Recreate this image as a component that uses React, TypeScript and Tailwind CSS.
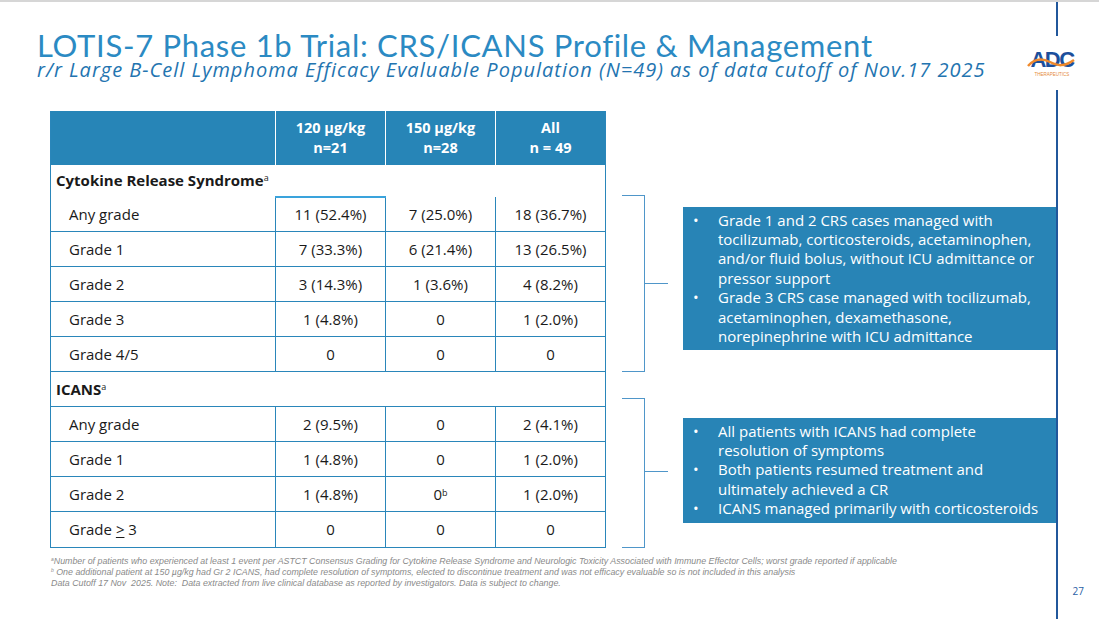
import React from "react";

const crsRows = [
  ["Any grade", "11 (52.4%)", "7 (25.0%)", "18 (36.7%)"],
  ["Grade 1", "7 (33.3%)", "6 (21.4%)", "13 (26.5%)"],
  ["Grade 2", "3 (14.3%)", "1 (3.6%)", "4 (8.2%)"],
  ["Grade 3", "1 (4.8%)", "0", "1 (2.0%)"],
  ["Grade 4/5", "0", "0", "0"],
];

const icansRows = [
  ["Any grade", "2 (9.5%)", "0", "2 (4.1%)"],
  ["Grade 1", "1 (4.8%)", "0", "1 (2.0%)"],
  ["Grade 2", "1 (4.8%)", "0b", "1 (2.0%)"],
  ["Grade >3", "0", "0", "0"],
];

function Cell({ value }: { value: string }) {
  if (value === "0b") {
    return (
      <>
        0<sup className="text-[9px]">b</sup>
      </>
    );
  }
  return <>{value}</>;
}

function Label({ value }: { value: string }) {
  if (value === "Grade >3") {
    return (
      <>
        Grade <span className="underline underline-offset-2">&gt;</span> 3
      </>
    );
  }
  return <>{value}</>;
}

function DataRow({ row, first }: { row: string[]; first?: boolean }) {
  return (
    <tr className="h-[35px] border-b border-[#2a86ba]">
      <td className="pl-[18px] text-left">
        <Label value={row[0]} />
      </td>
      {row.slice(1).map((v, i) => (
        <td
          key={i}
          className={
            "border-l border-[#2a86ba] text-center " +
            (first && i === 0 ? "border-t-2 border-t-[#3aa3dc]" : "")
          }
        >
          <Cell value={v} />
        </td>
      ))}
    </tr>
  );
}

function Bracket({ height, tick }: { height: number; tick: number }) {
  return (
    <div className="flex items-start">
      <div
        className="w-[23px] border-y-[1.5px] border-r-[1.5px] border-[#4f96c9]"
        style={{ height }}
      />
      <div className="w-[23px] h-[1.5px] bg-[#4f96c9]" style={{ marginTop: tick }} />
    </div>
  );
}

function Bullets({ items }: { items: string[] }) {
  return (
    <ul className="bg-[#2884b6] text-white text-[15px] leading-[19.4px] font-medium pl-[10px] pr-[12px] py-[4px]">
      {items.map((t, i) => (
        <li key={i} className="flex">
          <span className="w-[25px] shrink-0">•</span>
          <span>{t}</span>
        </li>
      ))}
    </ul>
  );
}

function AdcLogo() {
  return (
    <div
      className="absolute left-[1026px] top-[48px] w-[52px] h-[30px] bg-white flex flex-col items-center"
      style={{ fontFamily: "'Liberation Sans', Arial, sans-serif" }}
    >
      <div className="relative h-[19px] leading-[19px] text-[22px] font-bold tracking-[-1.5px] text-[#1c4f9c]">
        ADC
        <svg className="absolute left-[-3px] top-[6px]" width="50" height="12" viewBox="0 0 50 12">
          <path d="M1 10 C 8 2, 15 2, 23 6 S 37 11, 47 4" fill="none" stroke="#f08a2c" strokeWidth="2.5" />
        </svg>
      </div>
      <div className="mt-[3px] text-[4.5px] leading-[5px] text-[#e58a3a]">THERAPEUTICS</div>
    </div>
  );
}

export default function App() {
  return (
    <div
      className="relative w-[1099px] h-[619px] bg-white border-t-2 border-[#d6d6d6] flex overflow-hidden"
      style={{ fontFamily: "'Open Sans', Lato, sans-serif" }}
    >
      <main className="w-[1056px] flex flex-col">
        <header className="pl-[37px] pt-[29px]">
          <h1
            className="text-[31px] leading-[28px] tracking-[0.7px] text-[#2b8ac3] whitespace-nowrap"
            style={{ fontFamily: "Lato, 'Open Sans', sans-serif" }}
          >
            LOTIS-7 Phase 1b Trial: CRS/ICANS Profile &amp; Management
          </h1>
          <p className="mt-[1px] text-[20px] leading-[19.5px] tracking-[1px] italic text-[#2374b0] whitespace-nowrap">
            r/r Large B-Cell Lymphoma Efficacy Evaluable Population (N=49) as of data cutoff of Nov.17 2025
          </p>
        </header>

        <section className="flex pl-[50px] mt-[31px]">
          <table className="w-[555px] table-fixed border-collapse border-x border-b border-[#2a86ba] text-[15px] text-[#1a1a1a]">
            <colgroup>
              <col className="w-[225px]" />
              <col className="w-[110px]" />
              <col className="w-[110px]" />
              <col className="w-[110px]" />
            </colgroup>
            <thead>
              <tr className="h-[54px] bg-[#2785b7] text-white font-bold text-[14.5px] leading-[20px]">
                <th />
                <th className="border-l border-white">120 µg/kg<br />n=21</th>
                <th className="border-l border-white">150 µg/kg<br />n=28</th>
                <th className="border-l border-white">All<br />n = 49</th>
              </tr>
            </thead>
            <tbody>
              <tr className="h-[32px]">
                <td colSpan={4} className="pl-[5px] font-bold">
                  Cytokine Release Syndrome<sup className="text-[9px] font-normal">a</sup>
                </td>
              </tr>
              {crsRows.map((r, i) => (
                <DataRow key={r[0]} row={r} first={i === 0} />
              ))}
              <tr className="h-[35px] border-b border-[#2a86ba]">
                <td colSpan={4} className="pl-[5px] font-bold">
                  ICANS<sup className="text-[9px] font-normal">a</sup>
                </td>
              </tr>
              {icansRows.map((r) => (
                <DataRow key={r[0]} row={r} />
              ))}
            </tbody>
          </table>

          <div className="flex flex-col pl-[16px] pt-[84px]">
            <div className="flex items-start h-[177px]">
              <Bracket height={177} tick={88} />
              <div className="ml-[15px] mt-[12px] w-[373px]">
                <Bullets
                  items={[
                    "Grade 1 and 2 CRS cases managed with tocilizumab, corticosteroids, acetaminophen, and/or fluid bolus, without ICU admittance or pressor support",
                    "Grade 3 CRS case managed with tocilizumab, acetaminophen, dexamethasone, norepinephrine with ICU admittance",
                  ]}
                />
              </div>
            </div>
            <div className="flex items-start h-[150px] mt-[26px]">
              <Bracket height={150} tick={73} />
              <div className="ml-[15px] mt-[20px] w-[373px]">
                <Bullets
                  items={[
                    "All patients with ICANS had complete resolution of symptoms",
                    "Both patients resumed treatment and ultimately achieved a CR",
                    "ICANS managed primarily with corticosteroids",
                  ]}
                />
              </div>
            </div>
          </div>
        </section>

        <footer
          className="pl-[51px] mt-[8px] text-[8.85px] leading-[11px] italic text-[#8a8a8a]"
          style={{ fontFamily: "'Liberation Sans', Arial, sans-serif" }}
        >
          <p>
            <sup className="text-[5px]">a</sup>Number of patients who experienced at least 1 event per ASTCT Consensus Grading for Cytokine Release Syndrome and Neurologic Toxicity Associated with Immune Effector Cells; worst grade reported if applicable
          </p>
          <p>
            <sup className="text-[5px]">b</sup> One additional patient at 150 µg/kg had Gr 2 ICANS, had complete resolution of symptoms, elected to discontinue treatment and was not efficacy evaluable so is not included in this analysis
          </p>
          <p>Data Cutoff 17 Nov&nbsp; 2025. Note:&nbsp; Data extracted from live clinical database as reported by investigators. Data is subject to change.</p>
        </footer>
      </main>

      <aside className="w-[43px] flex flex-col">
        <div className="h-[34px] border-l-2 border-[#21579b]" />
        <div className="h-[54px]" />
        <div className="flex-1 border-l-2 border-[#21579b] flex flex-col justify-end items-end pr-[15px] pb-[20px]">
          <span className="text-[10px] text-[#2b5fa5]">27</span>
        </div>
      </aside>

      <AdcLogo />
    </div>
  );
}
